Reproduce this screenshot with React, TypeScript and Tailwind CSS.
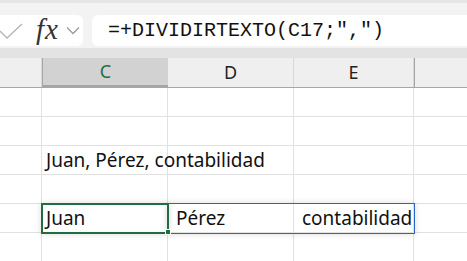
import React from "react";

const cols = [
  { key: "B", label: "", w: "w-[42px]" },
  { key: "C", label: "C", w: "w-[126px]" },
  { key: "D", label: "D", w: "w-[126px]" },
  { key: "E", label: "E", w: "w-[120px]" },
  { key: "F", label: "", w: "flex-1" },
];

const rows: (string | null)[][] = [
  [null, null, null, null],
  [null, null, null, null],
  [null, "Juan, Pérez, contabilidad", null, null],
  [null, null, null, null],
  [null, "Juan", "Pérez", "contabilidad"],
  [null, null, null, null],
];

export default function App() {
  return (
    <div className="w-[467px] h-[261px] overflow-hidden bg-white font-['Noto_Sans',sans-serif] text-[#111]">
      {/* formula bar */}
      <div className="h-[48px] bg-[#f3f3f3] border-t-[3px] border-[#e6e6e6] pt-[12px] flex gap-[9px]">
        <div className="-ml-[8px] w-[91px] h-[31px] bg-white rounded-md flex items-center">
          <svg width="32" height="16" viewBox="0 0 32 16" className="ml-[6px]">
            <path d="M2 8 L9 15 L24 1" fill="none" stroke="#b4b4b4" strokeWidth="1.3" />
          </svg>
          <span className="ml-[6px] font-['Liberation_Serif',serif] italic text-[29px] leading-none text-[#333] tracking-[1px] -mt-[3px]">fx</span>
          <svg width="14" height="9" viewBox="0 0 14 9" className="ml-[7px]">
            <path d="M1 1.5 L7 7.5 L13 1.5" fill="none" stroke="#9a9a9a" strokeWidth="1.3" />
          </svg>
        </div>
        <div className="flex-1 h-[31px] bg-white rounded-l-md flex items-center pl-[16px]">
          <span className="font-['Liberation_Mono',monospace] text-[20px] leading-none text-[#111]">
            =+DIVIDIRTEXTO(C17;",")
          </span>
        </div>
      </div>
      <div className="h-[10px] bg-[#e3e3e3]" />

      {/* column headers */}
      <div className="flex h-[30px] bg-[#efefef] border-b border-[#a6a6a6]">
        {cols.map((c) =>
          c.key === "C" ? (
            <div
              key={c.key}
              className={`${c.w} h-full bg-[#d2d2d2] border-b-2 border-[#1e6e42] border-l border-[#a6a6a6] flex items-center justify-center text-[18px] text-[#1e6e42]`}
            >
              {c.label}
            </div>
          ) : (
            <div
              key={c.key}
              className={`${c.w} h-full border-r border-[#d8d8d8] last:border-r-0 flex items-center justify-center text-[18px] text-[#222] ${c.key === "F" ? "border-l border-l-[#a6a6a6]" : ""}`}
            >
              {c.label}
            </div>
          )
        )}
      </div>

      {/* grid */}
      <div className="relative">
        {rows.map((r, i) => (
          <div key={i} className="flex h-[29px] border-b border-[#e1e1e1] text-[19px] leading-[26px]">
            <div className="w-[42px] h-full border-r border-[#e1e1e1]" />
            <div className="w-[126px] h-full border-r border-[#e1e1e1] relative">
              {r[1] && (
                <span className="absolute left-[4px] top-[1px] whitespace-nowrap z-10">{r[1]}</span>
              )}
            </div>
            <div className="w-[126px] h-full border-r border-[#e1e1e1] pl-[8px] pt-[1px]">{r[2]}</div>
            <div className="w-[120px] h-full border-r border-[#e1e1e1] pl-[8px] pt-[1px] whitespace-nowrap">{r[3]}</div>
            <div className="flex-1 h-full" />
          </div>
        ))}

        {/* selection range */}
        <div className="absolute left-[167px] top-[115px] w-[248px] h-[31px] border border-[#2b64c8] shadow-[0_0_6px_rgba(0,0,0,0.15)] pointer-events-none" />
        <div className="absolute left-[41px] top-[115px] w-[128px] h-[31px] border-2 border-[#1e6e42] shadow-[0_0_6px_rgba(0,0,0,0.15)] pointer-events-none" />
        <div className="absolute left-[165px] top-[141px] w-[6px] h-[6px] bg-[#1e6e42] border border-white pointer-events-none" />
      </div>
    </div>
  );
}
